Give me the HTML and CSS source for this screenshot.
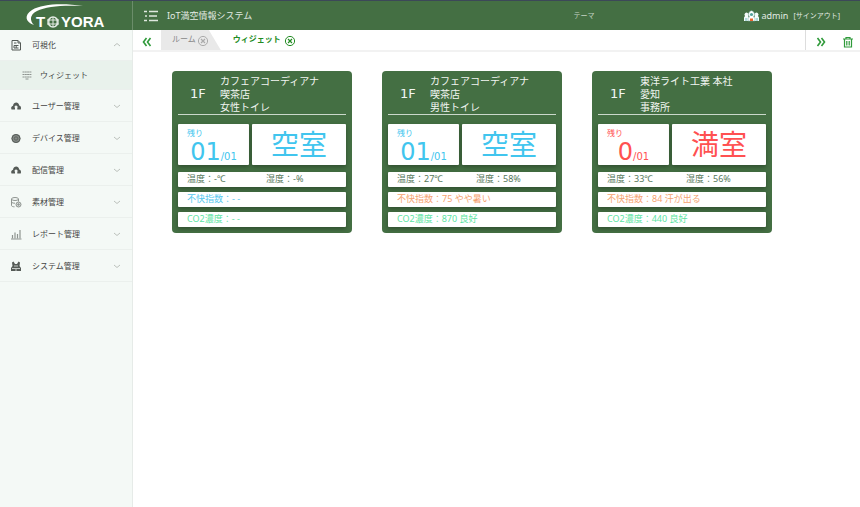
FILE: index.html
```html
<!DOCTYPE html>
<html lang="ja">

<head>
    <meta charset="UTF-8" />
    <title>IoT満空情報システム</title>
    <meta name="viewport" content="width=device-width, initial-scale=1.0" />
    <link rel="stylesheet" href="styles.css">
</head>

<body>
    <!-- Shared icons -->
    <svg class="icon-defs" aria-hidden="true">
        <symbol id="chevron" viewBox="0 0 8 8">
            <path d="M1 3l3 2.500 3-2.500" fill="none" stroke="currentColor" stroke-width="0.900" />
        </symbol>
        <symbol id="cloud" viewBox="0 0 12 12">
            <path d="M1.500 9.500C.5 7.500 1.800 6 3 5.800 3.300 3.500 4.800 2.500 6.200 2.500S9 3.600 9.200 5.400c1.700.3 2.300 2.500 1.500 4.100H7.300V7.300h1L6 5.300 3.900 7.300H5v2.200z" fill="currentColor" />
        </symbol>
        <symbol id="close" viewBox="0 0 12 12">
            <circle cx="6" cy="6" r="4.600" fill="none" stroke="currentColor" />
            <path d="M4 4l4 4M8 4l-4 4" stroke="currentColor" stroke-width="1.200" />
        </symbol>
    </svg>

    <header class="header">
        <a class="logo" href="#" aria-label="TOYORA">
            <svg viewBox="0 0 132 29">
                <path d="M34 24C25 21 24 14 32 9 42 3 62 2 83 5 64 4 46 5 37 10 29 14 30 20 34 24z" fill="#fff" />
                <text x="36" y="26">T</text>
                <text x="61" y="26">YORA</text>
                <circle cx="53" cy="21" r="5" fill="none" stroke="#e4ebe4" stroke-width="1.500" />
                <path d="M47 19h12M47 23h12M53 16v10M50.500 16.500c-2 3-2 6 0 9M55.500 16.500c2 3 2 6 0 9" fill="none" stroke="#e4ebe4" stroke-width="1" />
            </svg>
        </a>
        <div class="topbar">
            <button type="button" class="icon-btn menu-toggle" aria-label="メニュー">
                <svg width="14" height="12" viewBox="0 0 14 12">
                    <path d="M0 1.500h3M5 1.500h9M1 6h2M5 6h8M0 10.500h3M5 10.500h9" stroke="#dfe8df" stroke-width="1.400" />
                </svg>
            </button>
            <h1>IoT満空情報システム</h1>
            <a class="theme" href="#">テーマ</a>
            <div class="user">
                <svg width="17" height="12" viewBox="0 0 17 12">
                    <path d="M1 11V7.500L2 6a2 2 0 1 1 3 0l1 1.500V11zM11 11V7.500L12 6a2 2 0 1 1 3 0l1 1.500V11z" fill="#f5fbfb" />
                    <path d="M5 11V8l1.500-1a3 3.500 0 1 1 4 0L12 8v3z" fill="#fff" stroke="#6fa9a0" stroke-width="0.500" />
                    <circle cx="8.500" cy="4.500" r="1.600" fill="#55a39c" />
                    <path d="M3 8v3M14 8v3" stroke="#69b7ba" />
                    <path d="M7 8.500h3v2.500H7z" fill="#e8642d" />
                </svg>
                <span class="user-name">admin</span>
                <a class="signout" href="#">[サインアウト]</a>
            </div>
        </div>
    </header>

    <div class="layout">
        <nav class="sidebar">
            <ul>
                <li>
                    <a class="menu-item open" href="#">
                        <svg class="menu-icon" viewBox="0 0 12 12"><path d="M2 1.500h6L10.500 4v7H2zM8 1.500V4h2.500M4 4h2.500M4 6.500h4.500M4 9h4.500M4 6.500V9M6.200 6.500V9" fill="none" stroke="currentColor" /></svg>
                        可視化
                        <svg class="arrow up"><use href="#chevron" /></svg>
                    </a>
                    <a class="submenu-item" href="#">
                        <svg class="menu-icon" viewBox="0 0 12 12"><path d="M1.500 3h9M1.500 5.500h9M1.500 8h9" stroke="currentColor" stroke-dasharray="2 .3" /><path d="M4.500 10h3" stroke="currentColor" /></svg>
                        ウィジェット
                    </a>
                </li>
                <li>
                    <a class="menu-item" href="#">
                        <svg class="menu-icon"><use href="#cloud" /></svg>
                        ユーザー管理
                        <svg class="arrow"><use href="#chevron" /></svg>
                    </a>
                </li>
                <li>
                    <a class="menu-item" href="#">
                        <svg class="menu-icon" viewBox="0 0 12 12"><circle cx="6" cy="6.500" r="4.500" fill="#858b87" /><circle cx="6" cy="6.500" r="4" fill="none" stroke="currentColor" /><circle cx="6" cy="6.500" r="1.700" fill="none" stroke="currentColor" stroke-width="0.800" /></svg>
                        デバイス管理
                        <svg class="arrow"><use href="#chevron" /></svg>
                    </a>
                </li>
                <li>
                    <a class="menu-item" href="#">
                        <svg class="menu-icon"><use href="#cloud" /></svg>
                        配信管理
                        <svg class="arrow"><use href="#chevron" /></svg>
                    </a>
                </li>
                <li>
                    <a class="menu-item" href="#">
                        <svg class="menu-icon light" viewBox="0 0 12 12"><ellipse cx="5" cy="3" rx="3.500" ry="1.500" fill="none" stroke="currentColor" /><path d="M1.500 3v6.500c0 .8 1.500 1.300 3 1.300M8.500 3v2.500M1.500 6c.5 1 2 1.200 3.500 1.200" fill="none" stroke="currentColor" /><circle cx="8.500" cy="8.500" r="2.500" fill="#d5dad7" stroke="currentColor" /><path d="M8.500 7v3M7 8.500h3" stroke="currentColor" stroke-width="0.700" /></svg>
                        素材管理
                        <svg class="arrow"><use href="#chevron" /></svg>
                    </a>
                </li>
                <li>
                    <a class="menu-item" href="#">
                        <svg class="menu-icon light" viewBox="0 0 12 12"><path d="M2.500 7v3.500M5 4.500v6M7.500 6v4.500M10 2v8.500" stroke="currentColor" stroke-width="1.200" /><path d="M1 11h10.500" stroke="currentColor" /></svg>
                        レポート管理
                        <svg class="arrow"><use href="#chevron" /></svg>
                    </a>
                </li>
                <li>
                    <a class="menu-item" href="#">
                        <svg class="menu-icon" viewBox="0 0 12 12"><path d="M1 8l1.500-2L2 2.500 3.500 1.500 5 4h2l1.500-2.500L10 2.500 9.500 6 11 8v3H1z" fill="currentColor" /><path d="M2 8.500h8M4 6h4M6 9v2" stroke="#f3f8f5" stroke-width="0.700" /></svg>
                        システム管理
                        <svg class="arrow"><use href="#chevron" /></svg>
                    </a>
                </li>
            </ul>
        </nav>

        <main class="main">
            <div class="tabs">
                <button type="button" class="icon-btn tab-prev" aria-label="前へ">
                    <svg width="10" height="10" viewBox="0 0 10 10"><path d="M4.500 1L1.500 5l3 4M8.500 1l-3 4 3 4" fill="none" stroke="currentColor" stroke-width="1.600" /></svg>
                </button>
                <a class="tab" href="#">ルーム<svg class="tab-close"><use href="#close" /></svg></a>
                <a class="tab active" href="#">ウィジェット<svg class="tab-close"><use href="#close" /></svg></a>
                <div class="tab-tools">
                    <button type="button" class="icon-btn" aria-label="次へ">
                        <svg width="10" height="10" viewBox="0 0 10 10"><path d="M1.500 1l3 4-3 4M5.500 1l3 4-3 4" fill="none" stroke="currentColor" stroke-width="1.600" /></svg>
                    </button>
                    <button type="button" class="icon-btn" aria-label="すべて閉じる">
                        <svg width="12" height="12" viewBox="0 0 12 12"><path d="M1 3h10M4 3V1.500h4V3M2.500 3v8h7V3M4.800 5v4.500M7.200 5v4.500" fill="none" stroke="currentColor" stroke-width="1.200" /></svg>
                    </button>
                </div>
            </div>

            <div class="cards">
                <section class="card vacant">
                    <div class="card-head">
                        <span class="floor">1F</span>
                        <h2>カフェアコーディアナ<br>喫茶店<br>女性トイレ</h2>
                    </div>
                    <div class="status">
                        <div class="panel remain">
                            <span class="remain-label">残り</span>
                            <span class="count"><b>01</b>/01</span>
                        </div>
                        <div class="panel state">空室</div>
                    </div>
                    <div class="panel row climate"><span>温度：-℃</span><span>湿度：-%</span></div>
                    <div class="panel row discomfort none">不快指数：- -</div>
                    <div class="panel row co2">CO2濃度：- -</div>
                </section>

                <section class="card vacant">
                    <div class="card-head">
                        <span class="floor">1F</span>
                        <h2>カフェアコーディアナ<br>喫茶店<br>男性トイレ</h2>
                    </div>
                    <div class="status">
                        <div class="panel remain">
                            <span class="remain-label">残り</span>
                            <span class="count"><b>01</b>/01</span>
                        </div>
                        <div class="panel state">空室</div>
                    </div>
                    <div class="panel row climate"><span>温度：27℃</span><span>湿度：58%</span></div>
                    <div class="panel row discomfort">不快指数：75 やや暑い</div>
                    <div class="panel row co2">CO2濃度：870 良好</div>
                </section>

                <section class="card full">
                    <div class="card-head">
                        <span class="floor">1F</span>
                        <h2>東洋ライト工業 本社<br>愛知<br>事務所</h2>
                    </div>
                    <div class="status">
                        <div class="panel remain">
                            <span class="remain-label">残り</span>
                            <span class="count"><b>0</b>/01</span>
                        </div>
                        <div class="panel state">満室</div>
                    </div>
                    <div class="panel row climate"><span>温度：33℃</span><span>湿度：56%</span></div>
                    <div class="panel row discomfort">不快指数：84 汗が出る</div>
                    <div class="panel row co2">CO2濃度：440 良好</div>
                </section>
            </div>
        </main>
    </div>
</body>

</html>
```

FILE: styles.css
```css
* {
    box-sizing: border-box;
}

body {
    margin: 0;
    min-height: 100vh;
    display: flex;
    flex-direction: column;
    font-family: "Noto Sans", "Noto Sans CJK JP", sans-serif;
    font-size: 8px;
    line-height: 12px;
    color: #444;
    background: #fff;
}

a {
    color: inherit;
    text-decoration: none;
}

svg {
    display: block;
    flex: none;
}

ul {
    list-style: none;
    margin: 0;
    padding: 0;
}

h1,
h2 {
    margin: 0;
    font-weight: normal;
}

.icon-defs {
    position: absolute;
    width: 0;
    height: 0;
}

.icon-btn {
    display: flex;
    padding: 0;
    border: none;
    background: none;
    color: #2f9a3a;
    cursor: pointer;
}

/* Header */
.header {
    display: flex;
    height: 30px;
    border-top: 1px solid #3c4858;
    background: #446f43;
    color: #e3ebe3;
}

.logo {
    width: 133px;
    border-right: 1px solid #6b8d6a;
}

.logo text {
    fill: #fff;
    font-family: "Liberation Sans", sans-serif;
    font-size: 15px;
    font-weight: bold;
}

.topbar {
    flex: 1;
    display: flex;
    align-items: center;
    padding: 0 20px 0 11px;
}

.topbar h1 {
    margin-left: 9px;
    font-size: 9px;
}

.theme {
    margin-left: auto;
    font-size: 7px;
    color: #c5d3c5;
}

.user {
    display: flex;
    align-items: center;
    margin-left: 148px;
}

.user-name {
    margin: 0 5px 0 2px;
    font-size: 9px;
}

.signout {
    font-size: 7px;
}

/* Sidebar */
.layout {
    flex: 1;
    display: flex;
}

.sidebar {
    width: 133px;
    background: #f4f9f6;
    border-right: 1px solid #e6ebe8;
}

.menu-item,
.submenu-item {
    display: flex;
    align-items: center;
    gap: 10px;
    height: 32px;
    padding: 0 11px 0 10px;
    border-bottom: 1px solid #ebf0ed;
}

.submenu-item {
    gap: 7px;
    height: 29px;
    padding-left: 21px;
    background: #e9f2ec;
}

.menu-item.open {
    height: 31px;
}

.menu-icon {
    width: 12px;
    height: 12px;
    color: #555b57;
}

.menu-icon.light,
.submenu-item .menu-icon {
    color: #8e9490;
}

.arrow {
    width: 8px;
    height: 8px;
    margin-left: auto;
    color: #b4bab6;
}

.arrow.up {
    transform: rotate(180deg);
}

/* Tabs */
.main {
    flex: 1;
    min-width: 0;
}

.tabs {
    display: flex;
    height: 22px;
    border-bottom: 2px solid #f2f2f2;
}

.tab-prev {
    width: 28px;
    padding-top: 3px;
    align-items: center;
    justify-content: center;
}

.tab {
    display: flex;
    align-items: center;
    gap: 1px;
    padding: 0 12px 2px 11px;
    background: #e9e9e9;
    color: #888;
    clip-path: polygon(0 0, 80% 0, 100% 100%, 0 100%);
}

.tab.active {
    gap: 3px;
    padding-left: 12px;
    background: none;
    color: #228b22;
    font-weight: bold;
    clip-path: none;
}

.tab-close {
    width: 12px;
    height: 12px;
    margin-top: 3px;
    color: #aaa;
}

.tab.active .tab-close {
    color: #228b22;
}

.tab-tools {
    display: flex;
    align-items: center;
    gap: 16px;
    margin-left: auto;
    padding: 4px 6px 0 10px;
    border-left: 1px solid #ddd;
}

/* Cards */
.cards {
    display: flex;
    flex-wrap: wrap;
    gap: 30px;
    padding: 19px 39px;
}

.card {
    display: flex;
    flex-direction: column;
    gap: 5px;
    width: 180px;
    padding: 0 6px 6px;
    border-radius: 4px;
    background: #446f43;
}

.card-head {
    display: flex;
    align-items: center;
    height: 44px;
    padding-top: 3px;
    border-bottom: 1px solid #cbd8cb;
    color: #f2f6f2;
}

.floor {
    width: 42px;
    padding-left: 12px;
    font-family: "DejaVu Sans", sans-serif;
    font-size: 13px;
    line-height: 16px;
}

.card-head h2 {
    font-size: 10px;
    line-height: 13px;
}

.panel {
    background: #fff;
    border-radius: 1px;
    box-shadow: 0 2px 4px rgba(0, 0, 0, 0.3);
}

.status {
    display: flex;
    gap: 3px;
    margin: 4px 0 2px;
    height: 41px;
}

.remain {
    display: flex;
    flex-direction: column;
    width: 71px;
    padding: 3px 9px 0;
}

.remain-label {
    line-height: 11px;
}

.count {
    font-family: "DejaVu Sans", sans-serif;
    font-size: 10px;
    line-height: 28px;
    text-align: center;
}

.count b {
    font-size: 24px;
    font-weight: normal;
}

.state {
    flex: 1;
    font-size: 28px;
    line-height: 41px;
    text-align: center;
}

.vacant .status {
    color: #41c5ee;
}

.full .status {
    color: #ff5151;
}

.row {
    height: 15px;
    padding: 0 9px;
    font-size: 9px;
    line-height: 14px;
}

.climate {
    display: grid;
    grid-template-columns: 79px 1fr;
    color: #54775a;
}

.discomfort {
    color: #f5a26f;
}

.discomfort.none {
    color: #55c7ee;
}

.co2 {
    color: #5be3a2;
}
```
